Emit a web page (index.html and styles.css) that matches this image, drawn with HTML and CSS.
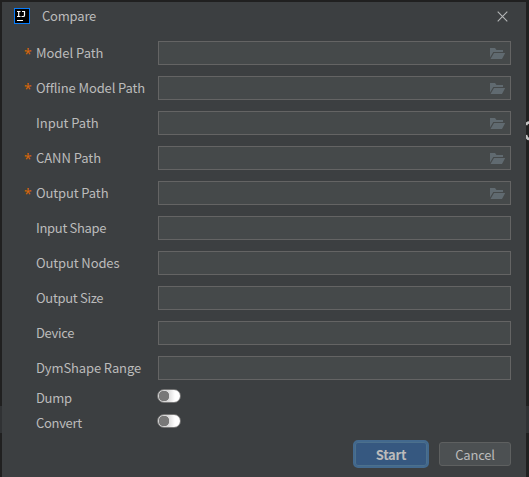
FILE: index.html
```html
<!DOCTYPE html>
<html lang="en">
<head>
<meta charset="utf-8">
<title>Compare</title>
<link rel="stylesheet" href="styles.css">
</head>
<body>
<svg width="0" height="0" class="defs">
  <symbol id="folder" viewBox="0 0 16 13"><path d="M0 1h5l1.500 2H13v2H3.300L0 10.500zM4 6h11.200L12 12H.5z"/></symbol>
</svg>
<svg class="behind" width="3" height="20" viewBox="0 0 3 20"><path d="M3 1.500Q1 1.500 0 4M0 14q1 4 3 4"/></svg>
<main class="dialog">
  <header class="titlebar">
    <svg class="logo" width="16" height="16" viewBox="0 0 16 16"><path fill="#087cfa" d="M0 0h16v16H0z"/><path fill="#000" d="M1 1h14v14H1z"/><path fill="none" stroke="#fff" stroke-width="1.200" d="M3 3.500h3.500M4.700 3.500v5M3 8.500h3.500M8 3.500h2.500v3.700q0 1.300-1.300 1.300H7.500M3 12.500h6"/></svg>
    <h1>Compare</h1>
    <svg class="close" width="11" height="11" viewBox="0 0 11 11"><path d="M.7.7l9.600 9.600M10.300.7L.7 10.300"/></svg>
  </header>
  <form class="form">
    <div class="row"><span class="star">*</span><label>Model Path</label><div class="field"><svg><use href="#folder"/></svg></div></div>
    <div class="row"><span class="star">*</span><label class="tight">Offline Model Path</label><div class="field"><svg><use href="#folder"/></svg></div></div>
    <div class="row"><label>Input Path</label><div class="field"><svg><use href="#folder"/></svg></div></div>
    <div class="row"><span class="star">*</span><label>CANN Path</label><div class="field"><svg><use href="#folder"/></svg></div></div>
    <div class="row"><span class="star">*</span><label class="tight">Output Path</label><div class="field"><svg><use href="#folder"/></svg></div></div>
    <div class="row"><label class="tight2">Input Shape</label><div class="field"></div></div>
    <div class="row"><label class="tight">Output Nodes</label><div class="field"></div></div>
    <div class="row"><label class="tight2">Output Size</label><div class="field"></div></div>
    <div class="row"><label class="tight2">Device</label><div class="field"></div></div>
    <div class="row"><label class="tight">DymShape Range</label><div class="field"></div></div>
  </form>
  <div class="switches">
    <div class="row"><label class="tight2">Dump</label><span class="toggle"></span></div>
    <div class="row"><label class="tight2">Convert</label><span class="toggle"></span></div>
  </div>
  <footer class="actions">
    <button class="btn primary">Start</button>
    <button class="btn">Cancel</button>
  </footer>
</main>
</body>
</html>
```
FILE: styles.css
```css
* { box-sizing: border-box; }
body {
  margin: 0;
  height: 477px;
  padding: 2px 3px 0 2px;
  overflow: hidden;
  position: relative;
  background: linear-gradient(#202020 0 406px, #303234 406px 433px, #202020 433px);
  color: #bbb;
  font: 13px/18px "Noto Sans CJK SC", "Noto Sans", sans-serif;
}
.defs { position: absolute; }
.behind {
  position: absolute;
  left: 526px;
  top: 121px;
  fill: none;
  stroke: #c4c4c4;
  stroke-width: 2.5;
}
.dialog {
  position: relative;
  height: 475px;
  background: #3c3f41;
}
.titlebar {
  display: flex;
  align-items: center;
  height: 28px;
  padding: 0 18px 0 12px;
}
h1 {
  margin: 0 auto 0 12px;
  font-size: 13px;
  font-weight: 400;
  letter-spacing: -.2px;
  line-height: 18px;
}
.close { fill: none; stroke: #b4b6b7; stroke-width: 1.1; }
.form {
  display: grid;
  gap: 11px;
  padding-top: 11px;
}
.row {
  display: grid;
  grid-template-columns: 12px 122px 353px;
  align-items: center;
  height: 24px;
  padding-left: 22px;
}
.star {
  color: #d8660a;
  font: 14px/18px "Noto Sans", sans-serif;
  padding-top: 1px;
}
.row label { grid-column: 2; white-space: nowrap; letter-spacing: -.04px; }
.row .tight { letter-spacing: -.12px; }
.row .tight2 { letter-spacing: -.32px; }
.field {
  display: flex;
  align-items: center;
  justify-content: flex-end;
  height: 24px;
  padding-right: 4px;
  background: #45494a;
  border: 1px solid #646464;
}
.field svg { width: 16px; height: 13px; fill: #606a70; }
.switches { padding-top: 6px; }
.switches .row { height: 25px; }
.switches label { padding-bottom: 2px; }
.toggle {
  width: 24px;
  height: 14px;
  margin: -5px 0 0 -1px;
  border: 1px solid #777;
  border-radius: 7px;
  background: radial-gradient(circle at 6px 6px, #787878 0 5px, transparent 5.500px), linear-gradient(90deg, #d8d8d8 10px, #fff 17px);
}
.actions {
  display: flex;
  justify-content: flex-end;
  align-items: center;
  gap: 10px;
  height: 28px;
  margin-top: 4px;
  padding-right: 15px;
}
.btn {
  width: 72px;
  height: 24px;
  padding: 1px 0 0;
  border: 1px solid #5e6060;
  border-radius: 3px;
  background: #4c5052;
  color: #bbb;
  font: inherit;
  letter-spacing: -.2px;
}
.btn.primary {
  width: 76px;
  height: 28px;
  border: 2px solid #43698e;
  border-radius: 5px;
  background: #365880;
  box-shadow: inset 0 0 0 1px #4c708c;
  font-weight: 700;
}
```
